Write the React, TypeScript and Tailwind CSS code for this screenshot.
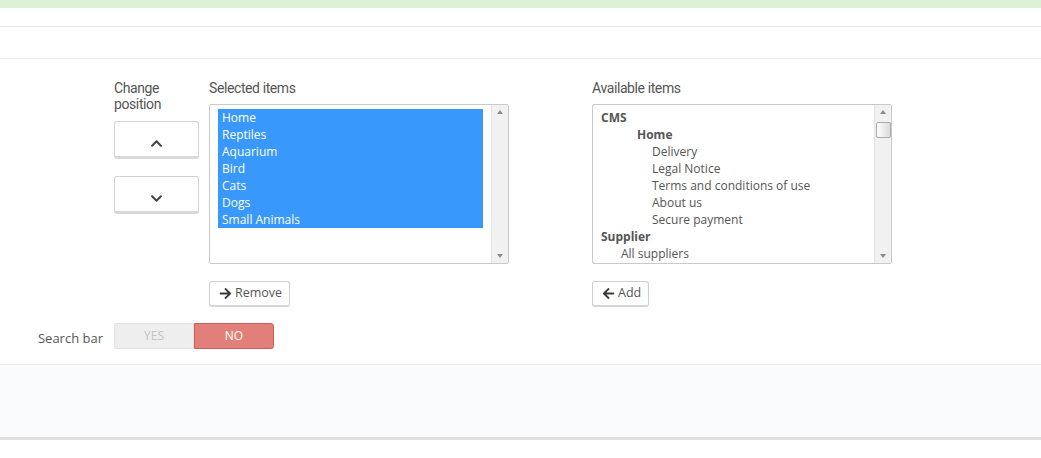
import React from 'react';
import { FaArrowRight, FaArrowLeft, FaChevronUp, FaChevronDown } from 'react-icons/fa';

const selected = ['Home', 'Reptiles', 'Aquarium', 'Bird', 'Cats', 'Dogs', 'Small Animals'];

const available: { label: string; indent: number; bold?: boolean }[] = [
  { label: 'CMS', indent: 0, bold: true },
  { label: 'Home', indent: 36, bold: true },
  { label: 'Delivery', indent: 51 },
  { label: 'Legal Notice', indent: 51 },
  { label: 'Terms and conditions of use', indent: 51 },
  { label: 'About us', indent: 51 },
  { label: 'Secure payment', indent: 51 },
  { label: 'Supplier', indent: 0, bold: true },
  { label: 'All suppliers', indent: 20 },
];

const labelFont = "font-['Roboto',sans-serif] tracking-[-0.4px]";

function FakeScrollbar({ thumb }: { thumb?: boolean }) {
  return (
    <div className="w-[17px] h-full bg-[#f1f1f1] border-l border-[#e4e4e4] flex flex-col items-center">
      <div className="h-[14px] flex items-center justify-center">
        <div className="w-0 h-0 border-l-[3px] border-r-[3px] border-b-[4px] border-l-transparent border-r-transparent border-b-[#8a8a8a]" />
      </div>
      {thumb && (
        <div className="w-[15px] h-[16px] mt-[3px] rounded-[2px] border border-[#a9a9a9] bg-gradient-to-r from-[#fdfdfd] to-[#dcdcdc]" />
      )}
      <div className="flex-1" />
      <div className="h-[14px] flex items-center justify-center">
        <div className="w-0 h-0 border-l-[3px] border-r-[3px] border-t-[4px] border-l-transparent border-r-transparent border-t-[#8a8a8a]" />
      </div>
    </div>
  );
}

function SmallButton({ icon, label }: { icon: React.ReactNode; label: string }) {
  return (
    <button className="h-[26px] pl-[9px] pr-[7px] flex items-center gap-[3px] bg-white border border-[#cfcfcf] border-b-[2px] border-b-[#d6d6d6] rounded-[3px] text-[12.5px] text-[#555]">
      <span className="text-[#3a3a3a] text-[13px]">{icon}</span>
      {label}
    </button>
  );
}

function MoveButton({ children }: { children: React.ReactNode }) {
  return (
    <button className="w-[85px] h-[38px] pt-[8px] flex items-center justify-center bg-white border border-[#d3d3d3] border-b-[3px] border-b-[#d9d9d9] rounded-[3px] text-[#444] text-[13px]">
      {children}
    </button>
  );
}

export default function App() {
  return (
    <div className="w-[1041px] h-[458px] bg-white text-[#555] font-['Open_Sans',sans-serif] overflow-hidden">
      <div className="h-[8px] bg-[#dff0d8]" />
      <div className="h-[19px] border-b border-[#e5e5e5]" />
      <div className="h-[32px] border-b border-[#ececec]" />

      <div className="pt-[21px] pb-[15px] border-b border-[#ececec]">
        <div className="flex items-start">
          <div className="w-[114px]" />
          <div className="w-[85px] flex flex-col">
            <div className={`${labelFont} text-[14px] leading-[16px] text-[#555] h-[32px]`}>
              Change
              <br />
              position
            </div>
            <div className="mt-[9px]">
              <MoveButton>
                <FaChevronUp />
              </MoveButton>
            </div>
            <div className="mt-[17px]">
              <MoveButton>
                <FaChevronDown />
              </MoveButton>
            </div>
          </div>

          <div className="w-[300px] ml-[10px] flex flex-col">
            <div className={`${labelFont} text-[14px] leading-[16px] h-[24px]`}>Selected items</div>
            <div className="h-[160px] border border-[#c9c9c9] rounded-[2px] flex bg-white">
              <div className="flex-1 pt-[4px] pl-[8px] pr-[8px]">
                <div className="bg-[#3898fc]">
                  {selected.map((s) => (
                    <div key={s} className="h-[17px] leading-[17px] pl-[4px] text-[12px] text-white">
                      {s}
                    </div>
                  ))}
                </div>
              </div>
              <FakeScrollbar />
            </div>
            <div className="mt-[17px] flex">
              <SmallButton icon={<FaArrowRight />} label="Remove" />
            </div>
          </div>

          <div className="w-[300px] ml-[83px] flex flex-col">
            <div className={`${labelFont} text-[14px] leading-[16px] h-[24px]`}>Available items</div>
            <div className="h-[160px] border border-[#c9c9c9] rounded-[2px] flex bg-white">
              <div className="flex-1 pt-[4px] pl-[8px] overflow-hidden">
                {available.map((a, i) => (
                  <div
                    key={i}
                    className={`h-[17px] leading-[17px] text-[12px] text-[#555] ${a.bold ? 'font-bold' : ''}`}
                    style={{ paddingLeft: a.indent }}
                  >
                    {a.label}
                  </div>
                ))}
              </div>
              <FakeScrollbar thumb />
            </div>
            <div className="mt-[17px] flex">
              <SmallButton icon={<FaArrowLeft />} label="Add" />
            </div>
          </div>
        </div>

        <div className="flex items-start mt-[16px]">
          <div className="w-[104px] pr-[1px] pt-[5px] text-right text-[13px] leading-[20px] text-[#555]">Search bar</div>
          <div className="ml-[10px] flex h-[26px] w-[160px] text-[12px]">
            <div className="w-[80px] flex items-center justify-center bg-[#eeeeee] border border-[#e2e2e2] rounded-l-[3px] text-[#c5c5c5]">
              YES
            </div>
            <div className="w-[80px] flex items-center justify-center bg-[#e08079] border border-[#d05a52] rounded-r-[3px] text-white">
              NO
            </div>
          </div>
        </div>
      </div>

      <div className="h-[75px] bg-[#fafbfd] border-b-[3px] border-[#e1e1e1]" />
    </div>
  );
}
